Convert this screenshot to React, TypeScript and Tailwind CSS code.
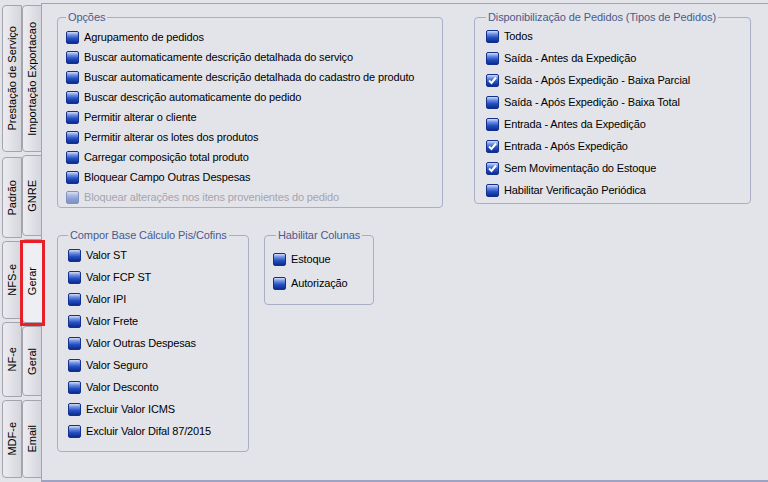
import React from 'react';

const font = { fontFamily: '"Liberation Sans", Arial, sans-serif' };

type Tab = { label: string; cls: string; selected?: boolean };

// Left vertical tab strip, two columns
const outerTabs: Tab[] = [
  { label: 'Prestação de Serviço', cls: 'mt-[5px] h-[147px]' },
  { label: 'Padrão', cls: 'mt-[5px] h-[81px]' },
  { label: 'NFS-e', cls: 'mt-[3px] h-[78px]' },
  { label: 'NF-e', cls: 'mt-[3px] h-[75px]' },
  { label: 'MDF-e', cls: 'mt-[3px] h-[78px]' },
];

const innerTabs: Tab[] = [
  { label: 'Importação Exportacao', cls: 'mt-[5px] h-[147px]' },
  { label: 'GNRE', cls: 'mt-[3px] h-[81px]' },
  { label: 'Gerar', cls: 'mt-[3px] h-[84px]', selected: true },
  { label: 'Geral', cls: 'mt-[3px] h-[70px]' },
  { label: 'Email', cls: 'mt-[4px] h-[78px]' },
];

const opcoes = [
  'Agrupamento de pedidos',
  'Buscar automaticamente descrição detalhada do serviço',
  'Buscar automaticamente descrição detalhada do cadastro de produto',
  'Buscar descrição automaticamente do pedido',
  'Permitir alterar o cliente',
  'Permitir alterar os lotes dos produtos',
  'Carregar composição total produto',
  'Bloquear Campo Outras Despesas',
];

const disponibilizacao = [
  { label: 'Todos', checked: false },
  { label: 'Saída - Antes da Expedição', checked: false },
  { label: 'Saída - Após Expedição - Baixa Parcial', checked: true },
  { label: 'Saída - Após Expedição - Baixa Total', checked: false },
  { label: 'Entrada - Antes da Expedição', checked: false },
  { label: 'Entrada - Após Expedição', checked: true },
  { label: 'Sem Movimentação do Estoque', checked: true },
  { label: 'Habilitar Verificação Periódica', checked: false },
];

const compor = [
  'Valor ST',
  'Valor FCP ST',
  'Valor IPI',
  'Valor Frete',
  'Valor Outras Despesas',
  'Valor Seguro',
  'Valor Desconto',
  'Excluir Valor ICMS',
  'Excluir Valor Difal 87/2015',
];

const TabButton: React.FC<{ tab: Tab }> = ({ tab }) => (
  <div
    className={`${tab.cls} flex items-center justify-center rounded-l-[4px] border border-[#a3a4ad] ${
      tab.selected
        ? 'relative z-10 w-[20px] border-r-0 bg-[#eeeff3]'
        : 'w-[20px] bg-[linear-gradient(to_right,#ececf0,#d5d6dd)]'
    }`}
  >
    <span className="rotate-180 whitespace-nowrap text-[11px] leading-none text-black [writing-mode:vertical-rl]">
      {tab.label}
    </span>
  </div>
);

const CheckBox: React.FC<{ checked?: boolean; disabled?: boolean }> = ({ checked, disabled }) => (
  <span
    className={`flex h-[13px] w-[13px] shrink-0 items-center justify-center rounded-[2px] border border-[#13308a] bg-[linear-gradient(to_bottom,#d2ddf8_0%,#6d8fe2_28%,#2350c4_60%,#0c2c8c_100%)] ${
      disabled ? 'opacity-45' : ''
    }`}
  >
    {checked && (
      <svg width="9" height="9" viewBox="0 0 9 9">
        <path d="M1 4.5 L3.5 7 L8 1.5" fill="none" stroke="#fff" strokeWidth="2" />
      </svg>
    )}
  </span>
);

const Row: React.FC<{ label: string; h: string; checked?: boolean; disabled?: boolean }> = ({
  label,
  h,
  checked,
  disabled,
}) => (
  <div className={`flex items-center gap-[5px] ${h}`}>
    <CheckBox checked={checked} disabled={disabled} />
    <span
      className={`whitespace-nowrap text-[11px] tracking-[-0.14px] ${disabled ? 'text-[#a3a4ad]' : 'text-black'}`}
    >
      {label}
    </span>
  </div>
);

const Group: React.FC<{ title: string; cls: string; legendCls?: string; children: React.ReactNode }> = ({
  title,
  cls,
  legendCls = '',
  children,
}) => (
  <fieldset className={`rounded-[4px] border border-[#a9aec6] ${cls}`}>
    <legend className={`px-[2px] text-[11px] leading-[13px] tracking-[-0.1px] text-[#4a5a8c] ${legendCls}`}>
      {title}
    </legend>
    {children}
  </fieldset>
);

export default function App() {
  return (
    <div className="relative flex h-[482px] w-[768px] overflow-hidden bg-[#e3e4ea]" style={font}>
      {/* tabs */}
      <div className="flex w-[41px] shrink-0 pl-[2px]">
        <div className="flex flex-col">
          {outerTabs.map((t) => (
            <TabButton key={t.label} tab={t} />
          ))}
        </div>
        <div className="-mr-px flex flex-col">
          {innerTabs.map((t) => (
            <TabButton key={t.label} tab={t} />
          ))}
        </div>
      </div>

      {/* content panel */}
      <div className="mt-[3px] flex flex-1 flex-col gap-[21px] border-t border-b-2 border-l border-t-[#a3a4ad] border-b-[#9ea3c4] border-l-[#a3a4ad] pt-[7px] pl-[15px]">
        <div className="flex items-start gap-[31px]">
          <Group title="Opções" cls="w-[386px] px-[8px] pt-[3px] pb-0">
            {opcoes.map((o) => (
              <Row key={o} label={o} h="h-[20px]" />
            ))}
            <Row label="Bloquear alterações nos itens provenientes do pedido" h="h-[20px]" disabled />
          </Group>
          <Group title="Disponibilização de Pedidos (Tipos de Pedidos)" cls="w-[277px] px-[11px] pt-px pb-[2px]">
            {disponibilizacao.map((d) => (
              <Row key={d.label} label={d.label} h="h-[22px]" checked={d.checked} />
            ))}
          </Group>
        </div>

        <div className="flex items-start gap-[15px]">
          <Group title="Compor Base Cálculo Pis/Cofins" cls="w-[192px] px-[10px] pt-[2px] pb-[9px]">
            {compor.map((c) => (
              <Row key={c} label={c} h="h-[22px]" />
            ))}
          </Group>
          <Group title="Habilitar Colunas" cls="w-[110px] px-[8px] pt-[5px] pb-[9px]" legendCls="ml-[3px]">
            <Row label="Estoque" h="h-[24px]" />
            <Row label="Autorização" h="h-[24px]" />
          </Group>
        </div>
      </div>

      {/* highlight marker over selected tab */}
      <div className="absolute top-[240px] left-[20px] z-20 h-[86px] w-[25px] border-[3px] border-[#e8202a]" />
    </div>
  );
}
